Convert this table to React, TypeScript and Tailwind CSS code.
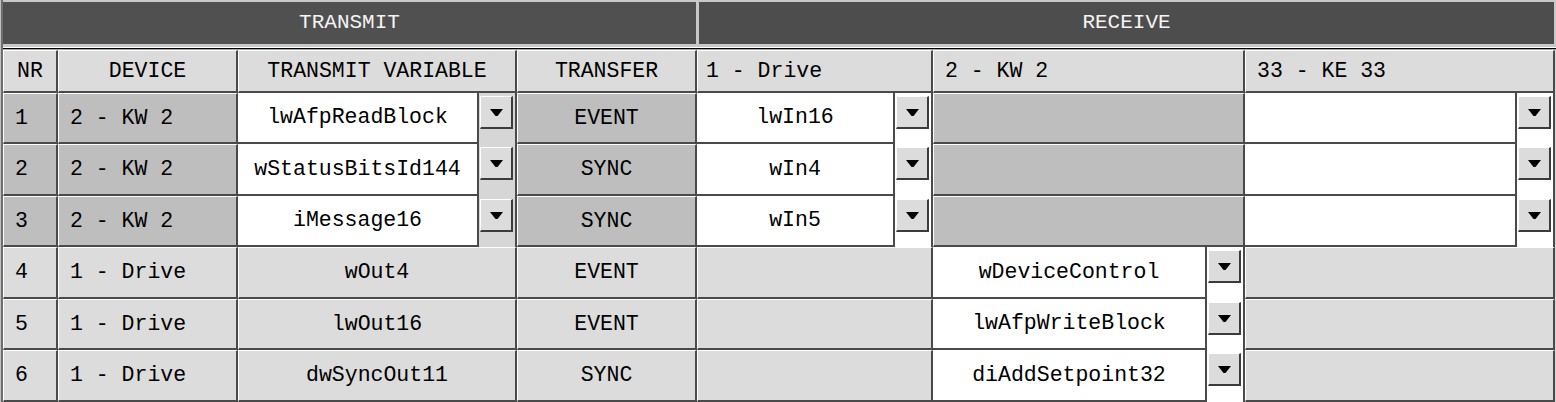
import React from "react";

const font = { fontFamily: '"Liberation Mono", "DejaVu Sans Mono", monospace' };

const cellBase =
  "border-t border-l border-t-white border-l-white border-r-2 border-b-2 border-r-[#4a4a4a] border-b-[#4a4a4a] flex items-center text-[21.5px] text-black whitespace-nowrap overflow-hidden";

function Cell({
  children,
  bg,
  align = "center",
  pad = "pl-[11px]",
}: {
  children?: React.ReactNode;
  bg: string;
  align?: "center" | "left";
  pad?: string;
}) {
  return (
    <div className={`${cellBase} ${bg} ${align === "center" ? "justify-center" : `justify-start ${pad}`}`}>
      {children}
    </div>
  );
}

function DropButton() {
  return (
    <div className="w-[33px] h-[33px] bg-[#dcdcdc] border-t border-l border-t-white border-l-white border-r-2 border-b-2 border-r-[#3c3c3c] border-b-[#3c3c3c] flex items-center justify-center">
      <svg width="13" height="7" viewBox="0 0 13 7">
        <polygon points="0,0 13,0 7.5,7 5.5,7" fill="#000" />
      </svg>
    </div>
  );
}

function Combo({ text, under }: { text?: string; under: string }) {
  return (
    <div className="flex border-r-2 border-r-[#4a4a4a] overflow-hidden">
      <div className="flex-1 bg-white border-r-2 border-b-2 border-[#4a4a4a] flex items-center justify-center text-[21.5px] text-black whitespace-nowrap">
        {text}
      </div>
      <div className={`w-[36px] ${under} pt-[3px] pl-[1px]`}>
        <DropButton />
      </div>
    </div>
  );
}

const G = "bg-[#bebebe]";
const L = "bg-[#dcdcdc]";

export default function App() {
  const top = [
    { nr: "1", dev: "2 - KW 2", tv: "lwAfpReadBlock", tr: "EVENT", r1: "lwIn16" },
    { nr: "2", dev: "2 - KW 2", tv: "wStatusBitsId144", tr: "SYNC", r1: "wIn4" },
    { nr: "3", dev: "2 - KW 2", tv: "iMessage16", tr: "SYNC", r1: "wIn5" },
  ];
  const bottom = [
    { nr: "4", dev: "1 - Drive", tv: "wOut4", tr: "EVENT", r2: "wDeviceControl" },
    { nr: "5", dev: "1 - Drive", tv: "lwOut16", tr: "EVENT", r2: "lwAfpWriteBlock" },
    { nr: "6", dev: "1 - Drive", tv: "dwSyncOut11", tr: "SYNC", r2: "diAddSetpoint32" },
  ];

  return (
    <div className="w-[1556px] h-[402px] overflow-hidden bg-[#c8c8c8]" style={font}>
      <div className="h-full border-l border-l-[#c0c0c0]">
        <div className="h-full border-l-2 border-l-[#6e6e6e] flex flex-col">
          {/* Top band */}
          <div className="h-[47px] bg-[#c8c8c8] pt-[2px] pb-[3px] flex gap-[3px] pr-[2px]">
            <div className="w-[693px] h-[42px] bg-[#505050] flex items-center justify-center text-[21px] text-[#f4f4f4]">
              TRANSMIT
            </div>
            <div className="flex-1 h-[42px] bg-[#4d4d4d] flex items-center justify-center text-[21px] text-[#f4f4f4]">
              RECEIVE
            </div>
          </div>
          <div className="h-[1px] bg-white" />
          <div className="h-[3px] bg-black" />
          <div className="h-[2px] bg-[#a8a8a8]" />

          {/* Table */}
          <div className="grid grid-cols-[55px_180px_279px_180px_236px_312px_310px] grid-rows-[43px_51px_52px_51px_52px_51px_52px] bg-[#d4d4d4]">
            <Cell bg={L}>NR</Cell>
            <Cell bg={L}>DEVICE</Cell>
            <Cell bg={L}>TRANSMIT VARIABLE</Cell>
            <Cell bg={L}>TRANSFER</Cell>
            <Cell bg={L} align="left" pad="pl-[8px]">1 - Drive</Cell>
            <Cell bg={L} align="left">2 - KW 2</Cell>
            <Cell bg={L} align="left">33 - KE 33</Cell>

            {top.map((r) => (
              <React.Fragment key={r.nr}>
                <Cell bg={G} align="left">{r.nr}</Cell>
                <Cell bg={G} align="left">{r.dev}</Cell>
                <Combo text={r.tv} under="bg-[#d6d6d6]" />
                <Cell bg={G}>{r.tr}</Cell>
                <Combo text={r.r1} under="bg-white" />
                <Cell bg={G} />
                <Combo under="bg-white" />
              </React.Fragment>
            ))}

            {bottom.map((r) => (
              <React.Fragment key={r.nr}>
                <Cell bg={L} align="left">{r.nr}</Cell>
                <Cell bg={L} align="left">{r.dev}</Cell>
                <Cell bg={L}>{r.tv}</Cell>
                <Cell bg={L}>{r.tr}</Cell>
                <Cell bg={L} />
                <Combo text={r.r2} under="bg-white" />
                <Cell bg={L} />
              </React.Fragment>
            ))}
          </div>
        </div>
      </div>
    </div>
  );
}
